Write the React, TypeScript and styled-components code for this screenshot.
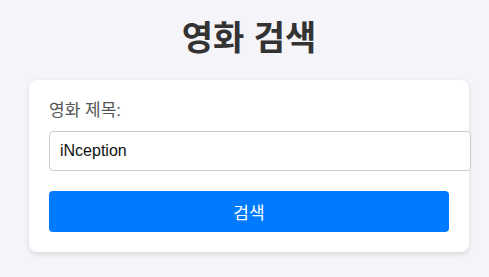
import React, { useState } from "react";
import styled, { createGlobalStyle } from "styled-components";

const GlobalStyle = createGlobalStyle`
  body {
    margin: 0;
    background: #f4f4f9;
    font-family: Arial, "Liberation Sans", "Noto Sans CJK KR", sans-serif;
  }
`;

const Page = styled.div`
  width: 440px;
  padding: 0 0 20px 29px;
`;

const Title = styled.h1`
  margin: 0;
  padding: 18px 0 22px;
  text-align: center;
  font-size: 34px;
  line-height: 40px;
  font-weight: bold;
  color: #333;
`;

const Card = styled.form`
  background: #fff;
  border-radius: 8px;
  box-shadow: 0 2px 5px rgba(0, 0, 0, 0.12);
  padding: 20px;
  width: 400px;
`;

const Label = styled.label`
  display: block;
  font-size: 17px;
  line-height: 22px;
  color: #555;
  margin-bottom: 9px;
`;

const Input = styled.input`
  display: block;
  width: 400px;
  height: 38px;
  box-sizing: content-box;
  padding: 0 10px;
  margin: 0 0 20px;
  border: 1px solid #ccc;
  border-radius: 4px;
  font-family: Arial, "Liberation Sans", sans-serif;
  font-size: 16px;
  color: #111;
  outline: none;
`;

const Button = styled.button`
  display: block;
  width: 400px;
  height: 41px;
  border: none;
  border-radius: 4px;
  background: #007bff;
  color: #fff;
  font-family: Arial, "Liberation Sans", "Noto Sans CJK KR", sans-serif;
  font-size: 17px;
  cursor: pointer;
`;

export default function App() {
  const [title, setTitle] = useState("iNception");

  return (
    <Page>
      <GlobalStyle />
      <Title>영화 검색</Title>
      <Card onSubmit={(e) => e.preventDefault()}>
        <Label htmlFor="movie">영화 제목:</Label>
        <Input
          id="movie"
          value={title}
          onChange={(e) => setTitle(e.target.value)}
        />
        <Button type="submit">검색</Button>
      </Card>
    </Page>
  );
}
